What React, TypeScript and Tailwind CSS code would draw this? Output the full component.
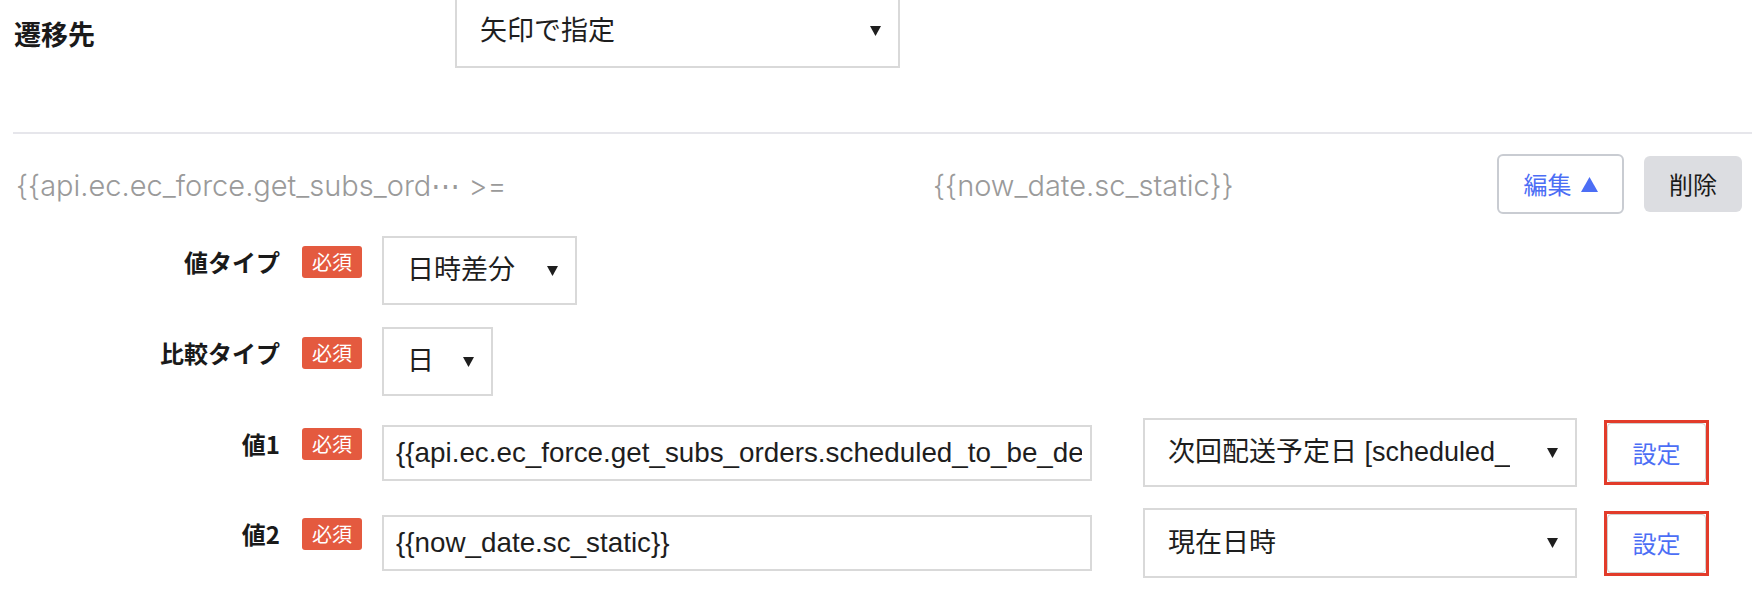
import React from "react";

const ui = "font-['Liberation_Sans','Noto_Sans_CJK_JP',sans-serif]";
const jp = "font-['Noto_Sans_CJK_JP',sans-serif]";
const sum = "font-['Inter','Noto_Sans_CJK_JP',sans-serif]";

function Down() {
  return (
    <svg width="11" height="10" viewBox="0 0 11 10" className="shrink-0">
      <path d="M0 0H11L5.5 10Z" fill="#1e1e1e" />
    </svg>
  );
}

function Select({ text, className }: { text: string; className: string }) {
  return (
    <div
      className={`flex items-center justify-between border-2 border-[#d9d9d9] bg-white pl-[23px] pr-[17px] text-[27px] text-[#1e1e1e] ${ui} ${className}`}
    >
      <span className="min-w-0 overflow-hidden whitespace-nowrap">{text}</span>
      <Down />
    </div>
  );
}

function Badge() {
  return (
    <div
      className={`ml-[22px] flex h-[32px] w-[60px] shrink-0 items-center justify-center rounded-[3px] bg-[#e45a3f] text-[20px] leading-none text-white ${jp}`}
    >
      必須
    </div>
  );
}

function Label({ text }: { text: string }) {
  return (
    <div className="flex h-[52px] shrink-0 items-center">
      <div className={`w-[280px] text-right text-[24px] font-bold text-[#1a1a1a] ${jp}`}>{text}</div>
      <Badge />
    </div>
  );
}

function SetButton() {
  return (
    <div className="ml-[27px] h-[65px] w-[105px] shrink-0 border-[3px] border-[#e23b2a] bg-white">
      <div
        className={`flex h-full w-full items-center justify-center rounded-[4px] border border-[#cfcfcf] text-[24px] text-[#4c6ef5] ${jp}`}
      >
        設定
      </div>
    </div>
  );
}

function TextInput({ text }: { text: string }) {
  return (
    <div
      className={`flex h-[56px] w-[710px] shrink-0 items-center overflow-hidden border-2 border-[#d9d9d9] bg-white pl-[12px] pr-[8px] text-[27.8px] text-[#1e1e1e] ${ui}`}
    >
      <span className="block min-w-0 flex-1 overflow-hidden whitespace-nowrap">{text}</span>
    </div>
  );
}

export default function App() {
  return (
    <div className="min-h-[594px] w-[1752px] overflow-hidden bg-white">
      {/* top row */}
      <div className="flex items-center pl-[14px]">
        <div className={`w-[441px] text-[27px] font-bold text-[#1a1a1a] ${jp}`}>遷移先</div>
        <Select text="矢印で指定" className="-mt-[6px] h-[74px] w-[445px]" />
      </div>

      {/* separator */}
      <div className="ml-[13px] mt-[64px] h-[2px] bg-[#e6e6eb]" />

      {/* summary row */}
      <div className="mt-[20px] flex h-[60px] items-center pl-[16px] pr-[10px]">
        <div className={`mt-[4px] w-[917px] whitespace-nowrap text-[29px] font-light text-[#9a9a9a] ${sum}`}>
          {"{{api.ec.ec_force.get_subs_ord"}
          <span className="font-['DejaVu_Sans',sans-serif]">⋯</span>
          {" >="}
        </div>
        <div className={`mt-[4px] flex-1 whitespace-nowrap text-[29px] font-light text-[#9a9a9a] ${sum}`}>
          {"{{now_date.sc_static}}"}
        </div>
        <div
          className={`flex h-[60px] w-[127px] items-center justify-center gap-[9px] rounded-[6px] border-2 border-[#c9ccd2] bg-white text-[24px] text-[#4c6ef5] ${jp}`}
        >
          <span>編集</span>
          <svg width="17" height="15" viewBox="0 0 17 15">
            <path d="M8.5 0L17 15H0Z" fill="#4c6ef5" />
          </svg>
        </div>
        <div
          className={`ml-[20px] flex h-[56px] w-[98px] items-center justify-center rounded-[6px] bg-[#dcdde1] text-[24px] text-[#1a1a1a] ${jp}`}
        >
          削除
        </div>
      </div>

      {/* form rows */}
      <div className="mt-[22px] flex flex-col gap-[22px]">
        <div className="flex items-start">
          <Label text="値タイプ" />
          <div className="ml-[20px] flex h-[69px] items-center">
            <Select text="日時差分" className="h-[69px] w-[195px]" />
          </div>
        </div>

        <div className="flex items-start">
          <Label text="比較タイプ" />
          <div className="ml-[20px] flex h-[69px] items-center">
            <Select text="日" className="h-[69px] w-[111px]" />
          </div>
        </div>

        <div className="flex items-start">
          <Label text="値1" />
          <div className="ml-[20px] flex h-[69px] items-center">
            <TextInput text="{{api.ec.ec_force.get_subs_orders.scheduled_to_be_delivered_at}}" />
            <Select text="次回配送予定日 [scheduled_" className="ml-[51px] h-[69px] w-[434px]" />
            <SetButton />
          </div>
        </div>

        <div className="-mt-[1px] flex items-start">
          <Label text="値2" />
          <div className="ml-[20px] flex h-[70px] items-center">
            <TextInput text="{{now_date.sc_static}}" />
            <Select text="現在日時" className="ml-[51px] h-[70px] w-[434px]" />
            <SetButton />
          </div>
        </div>
      </div>
    </div>
  );
}
